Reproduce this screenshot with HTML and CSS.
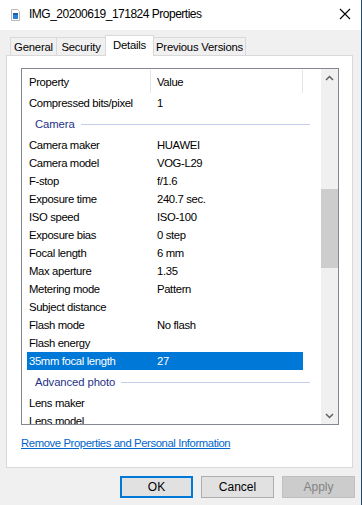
FILE: index.html
```html
<!DOCTYPE html>
<html lang="en">
<head>
    <meta charset="UTF-8">
    <meta name="viewport" content="width=device-width, initial-scale=1.0">
    <title>IMG_20200619_171824 Properties</title>
    <link rel="stylesheet" href="styles.css">
</head>
<body>
<div class="window">
    <!-- barra de titulo -->
    <div class="titlebar">
        <svg class="file-icon" width="16" height="16" viewBox="0 0 16 16">
            <path d="M3.5 2.5h6l2 2v9h-8z" fill="#fff" stroke="#b8b8b8"/>
            <rect x="5" y="6" width="5" height="6" fill="#2a7fd4"/>
            <rect x="5" y="6" width="5" height="2" fill="#1f5fa8"/>
        </svg>
        <span class="title">IMG_20200619_171824 Properties</span>
        <svg class="close" width="12" height="12" viewBox="0 0 12 12">
            <path d="M1 1l10 10M11 1L1 11" stroke="#000" stroke-width="1.1"/>
        </svg>
    </div>

    <div class="tabs">
        <div class="tab tab-general">General</div>
        <div class="tab tab-security">Security</div>
        <div class="tab tab-details active">Details</div>
        <div class="tab tab-previous">Previous Versions</div>
    </div>

    <div class="panel">
        <div class="list">
            <div class="rows">
                <div class="header">
                    <div class="col-name">Property</div>
                    <div class="col-value">Value</div>
                </div>

                <div class="row"><span class="name">Compressed bits/pixel</span><span class="value">1</span></div>

                <div class="group"><span>Camera</span><i class="line"></i></div>
                <div class="row"><span class="name">Camera maker</span><span class="value">HUAWEI</span></div>
                <div class="row"><span class="name">Camera model</span><span class="value">VOG-L29</span></div>
                <div class="row"><span class="name">F-stop</span><span class="value">f/1.6</span></div>
                <div class="row"><span class="name">Exposure time</span><span class="value">240.7 sec.</span></div>
                <div class="row"><span class="name">ISO speed</span><span class="value">ISO-100</span></div>
                <div class="row"><span class="name">Exposure bias</span><span class="value">0 step</span></div>
                <div class="row"><span class="name">Focal length</span><span class="value">6 mm</span></div>
                <div class="row"><span class="name">Max aperture</span><span class="value">1.35</span></div>
                <div class="row"><span class="name">Metering mode</span><span class="value">Pattern</span></div>
                <div class="row"><span class="name">Subject distance</span><span class="value"></span></div>
                <div class="row"><span class="name">Flash mode</span><span class="value">No flash</span></div>
                <div class="row"><span class="name">Flash energy</span><span class="value"></span></div>
                <div class="row selected"><span class="name">35mm focal length</span><span class="value">27</span></div>

                <div class="group"><span>Advanced photo</span><i class="line"></i></div>
                <div class="row"><span class="name">Lens maker</span><span class="value"></span></div>
                <div class="row"><span class="name">Lens model</span><span class="value"></span></div>
            </div>

            <!-- barra de rolagem -->
            <div class="scrollbar">
                <div class="arrow">
                    <svg width="9" height="6" viewBox="0 0 9 6"><path d="M1 5l3.5-3.5L8 5" fill="none" stroke="#606060" stroke-width="1.5"/></svg>
                </div>
                <div class="track">
                    <div class="thumb"></div>
                </div>
                <div class="arrow">
                    <svg width="9" height="6" viewBox="0 0 9 6"><path d="M1 1l3.5 3.5L8 1" fill="none" stroke="#606060" stroke-width="1.5"/></svg>
                </div>
            </div>
        </div>

        <a class="link" href="#">Remove Properties and Personal Information</a>
    </div>

    <div class="buttons">
        <button class="btn default">OK</button>
        <button class="btn">Cancel</button>
        <button class="btn disabled">Apply</button>
    </div>
</div>
</body>
</html>
```

FILE: styles.css
```css
* {
    margin: 0;
    padding: 0;
    box-sizing: border-box;
}

body {
    font-family: 'Liberation Sans', Arial, sans-serif;
    font-size: 11.3px;
    letter-spacing: -0.35px;
    color: #000;
    background-color: #f0f0f0;
}

/* Janela principal */
.window {
    width: 362px;
    height: 505px;
    background-color: #f0f0f0;
    border-right: 1px solid #1c4a74;
    overflow: hidden;
}

.titlebar {
    height: 30px;
    background-color: #fff;
    display: flex;
    align-items: center;
    padding-left: 8px;
}

.file-icon {
    margin-right: 5px;
    margin-top: -1px;
}

.title {
    font-size: 12px;
    flex: 1;
    letter-spacing: -0.5px;
    margin-top: -2px;
}

.close {
    margin-right: 10px;
    margin-top: -3px;
}

/* Abas */
.tabs {
    display: flex;
    align-items: flex-end;
    padding-left: 10px;
    margin-top: 5px;
    height: 20px;
}

.tab {
    height: 18px;
    border: 1px solid #d9d9d9;
    border-bottom: none;
    background-color: #f0f0f0;
    display: flex;
    align-items: center;
    justify-content: center;
    padding-top: 1px;
    letter-spacing: -0.2px;
}

.tab-general { width: 47px; }
.tab-security { width: 50px; margin-left: -1px; }
.tab-details { width: 49px; margin-left: -1px; }
.tab-previous { width: 93px; margin-left: -1px; }

.tab.active {
    height: 21px;
    margin-bottom: -1px;
    background-color: #fff;
    position: relative;
    z-index: 1;
    padding-top: 0;
    padding-bottom: 3px;
}

/* Painel */
.panel {
    margin-left: 6px;
    width: 347px;
    height: 413px;
    background-color: #fff;
    border: 1px solid #d9d9d9;
    padding: 12px 13px 0 14px;
}

.list {
    height: 357px;
    border: 1px solid #828790;
    display: flex;
    overflow: hidden;
}

.rows {
    flex: 1;
    overflow: hidden;
}

.header {
    height: 25px;
    display: flex;
    align-items: center;
}

.col-name {
    width: 129px;
    padding-left: 7px;
    border-right: 1px solid #e5e5e5;
    height: 23px;
    display: flex;
    align-items: center;
}

.col-value {
    width: 152px;
    padding-left: 6px;
    border-right: 1px solid #e5e5e5;
    height: 23px;
    display: flex;
    align-items: center;
}

.row {
    height: 18px;
    margin-left: 5px;
    width: 276px;
    display: flex;
    align-items: center;
}

.row .name {
    width: 130px;
    padding-left: 2px;
}

.row.selected {
    background-color: #0078d7;
    color: #fff;
}

.group {
    height: 24px;
    display: flex;
    align-items: center;
    padding-left: 13px;
    padding-right: 11px;
    color: #1e3287;
    letter-spacing: -0.1px;
}

.group .line {
    flex: 1;
    height: 1px;
    background-color: #c3cee8;
    margin-left: 6px;
}

/* Barra de rolagem */
.scrollbar {
    width: 17px;
    background-color: #f0f0f0;
    display: flex;
    flex-direction: column;
}

.arrow {
    height: 17px;
    display: flex;
    align-items: center;
    justify-content: center;
}

.track {
    flex: 1;
    padding-top: 103px;
}

.thumb {
    height: 79px;
    background-color: #cdcdcd;
}

.link {
    display: block;
    margin-top: 12px;
    color: #0066cc;
    text-decoration: underline;
    letter-spacing: -0.4px;
    width: max-content;
}

/* Botoes */
.buttons {
    display: flex;
    justify-content: flex-end;
    gap: 8px;
    padding-right: 6px;
    margin-top: 8px;
}

.btn {
    width: 73px;
    height: 22px;
    font-family: inherit;
    font-size: 12px;
    letter-spacing: 0;
    background-color: #e1e1e1;
    border: 1px solid #adadad;
    color: #000;
}

.btn.default {
    border: 2px solid #0078d7;
}

.btn.disabled {
    background-color: #cccccc;
    border-color: #bfbfbf;
    color: #838383;
}
```
